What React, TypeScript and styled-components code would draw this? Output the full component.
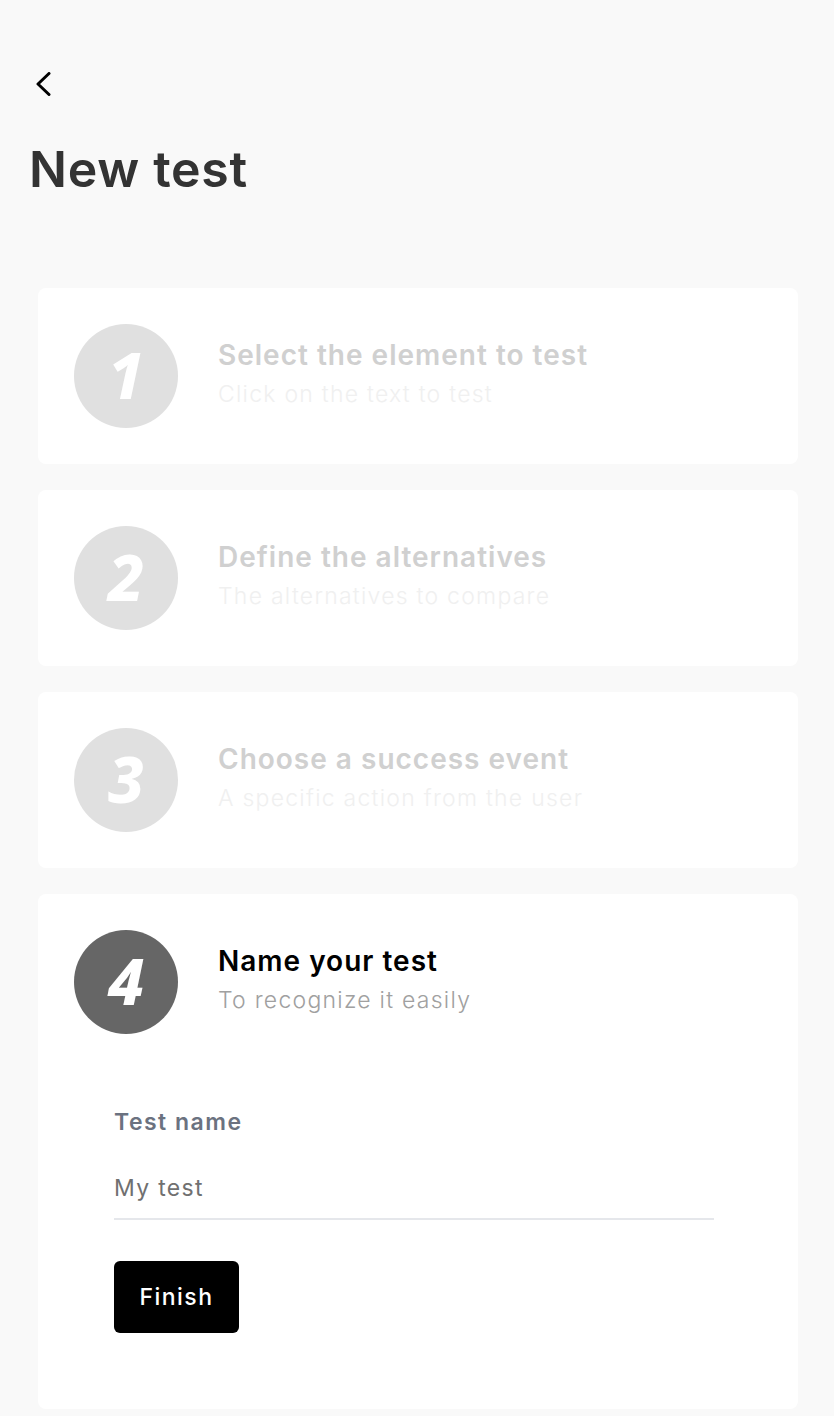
import React from "react";
import styled, { createGlobalStyle } from "styled-components";

const GlobalStyle = createGlobalStyle`
  html, body {
    margin: 0;
    padding: 0;
    background: #f9f9f9;
  }
  body {
    font-family: Inter, "Noto Sans", "Liberation Sans", sans-serif;
    -webkit-font-smoothing: antialiased;
  }
  * { box-sizing: border-box; }
`;

const Page = styled.div`
  display: flex;
  flex-direction: column;
  padding: 0 36px 8px 38px;
`;

const Header = styled.header`
  display: flex;
  flex-direction: column;
  align-items: flex-start;
  padding-top: 72px;
`;

const BackButton = styled.button`
  display: flex;
  align-items: center;
  justify-content: center;
  width: 24px;
  height: 24px;
  margin-left: -4px;
  padding: 0;
  border: none;
  background: transparent;
  cursor: pointer;
`;

const Title = styled.h1`
  margin: 44px 0 0 -9px;
  font-size: 50px;
  line-height: 58px;
  font-weight: 600;
  letter-spacing: 0.7px;
  color: #333333;
`;

const Steps = styled.div`
  display: flex;
  flex-direction: column;
  gap: 26px;
  margin-top: 90px;
`;

const Card = styled.section`
  display: flex;
  flex-direction: column;
  background: #ffffff;
  border-radius: 8px;
  padding: 36px;
`;

const StepHead = styled.div`
  display: flex;
  align-items: center;
  gap: 40px;
`;

const Circle = styled.div<{ $active: boolean }>`
  flex: none;
  width: 104px;
  height: 104px;
  border-radius: 50%;
  background: ${(p) => (p.$active ? "#666666" : "#e0e0e0")};
  display: flex;
  align-items: center;
  justify-content: center;
  color: #ffffff;
  font-family: "Noto Sans", "DejaVu Sans", sans-serif;
  font-style: italic;
  font-weight: 800;
  font-size: 64px;
  line-height: 1;
  padding-bottom: 2px;
`;

const StepText = styled.div`
  display: flex;
  flex-direction: column;
  gap: 8px;
  margin-top: -6px;
`;

const StepTitle = styled.div<{ $active: boolean }>`
  font-size: 28px;
  line-height: 34px;
  font-weight: 600;
  letter-spacing: 1px;
  color: ${(p) => (p.$active ? "#000000" : "#d0d0d0")};
`;

const StepSub = styled.div<{ $active: boolean }>`
  font-size: 23px;
  line-height: 28px;
  font-weight: 300;
  letter-spacing: 1.25px;
  color: ${(p) => (p.$active ? "#a0a0a0" : "#f0f0f0")};
`;

const Form = styled.form`
  display: flex;
  flex-direction: column;
  align-items: flex-start;
  padding: 74px 48px 40px 40px;
`;

const Label = styled.label`
  font-size: 23px;
  line-height: 28px;
  font-weight: 600;
  letter-spacing: 1.5px;
  color: #6b7280;
`;

const Input = styled.input`
  width: 600px;
  margin-top: 38px;
  padding: 0 0 16px 0;
  border: none;
  border-bottom: 2px solid #e5e7eb;
  background: transparent;
  font-family: inherit;
  font-size: 23px;
  line-height: 28px;
  letter-spacing: 1.3px;
  color: #707070;
  outline: none;
  &::placeholder { color: #707070; }
`;

const FinishButton = styled.button`
  margin-top: 41px;
  width: 125px;
  height: 72px;
  border: none;
  border-radius: 6px;
  background: #000000;
  color: #ffffff;
  font-family: inherit;
  font-size: 23px;
  font-weight: 500;
  letter-spacing: 1.5px;
  cursor: pointer;
`;

const steps = [
  { n: "1", title: "Select the element to test", sub: "Click on the text to test" },
  { n: "2", title: "Define the alternatives", sub: "The alternatives to compare" },
  { n: "3", title: "Choose a success event", sub: "A specific action from the user" },
  { n: "4", title: "Name your test", sub: "To recognize it easily" },
];

export default function App() {
  return (
    <>
      <GlobalStyle />
      <Page>
        <Header>
          <BackButton aria-label="Back">
            <svg width="24" height="24" viewBox="0 0 24 24" fill="none">
              <polyline
                points="15,1.5 4,12 15,22.5"
                stroke="#000"
                strokeWidth="3"
                strokeLinecap="round"
                strokeLinejoin="round"
              />
            </svg>
          </BackButton>
          <Title>New test</Title>
        </Header>
        <Steps>
          {steps.map((s, i) => {
            const active = i === 3;
            return (
              <Card key={s.n}>
                <StepHead>
                  <Circle $active={active}>{s.n}</Circle>
                  <StepText>
                    <StepTitle $active={active}>{s.title}</StepTitle>
                    <StepSub $active={active}>{s.sub}</StepSub>
                  </StepText>
                </StepHead>
                {active && (
                  <Form onSubmit={(e) => e.preventDefault()}>
                    <Label htmlFor="test-name">Test name</Label>
                    <Input id="test-name" defaultValue="My test" />
                    <FinishButton type="submit">Finish</FinishButton>
                  </Form>
                )}
              </Card>
            );
          })}
        </Steps>
      </Page>
    </>
  );
}
